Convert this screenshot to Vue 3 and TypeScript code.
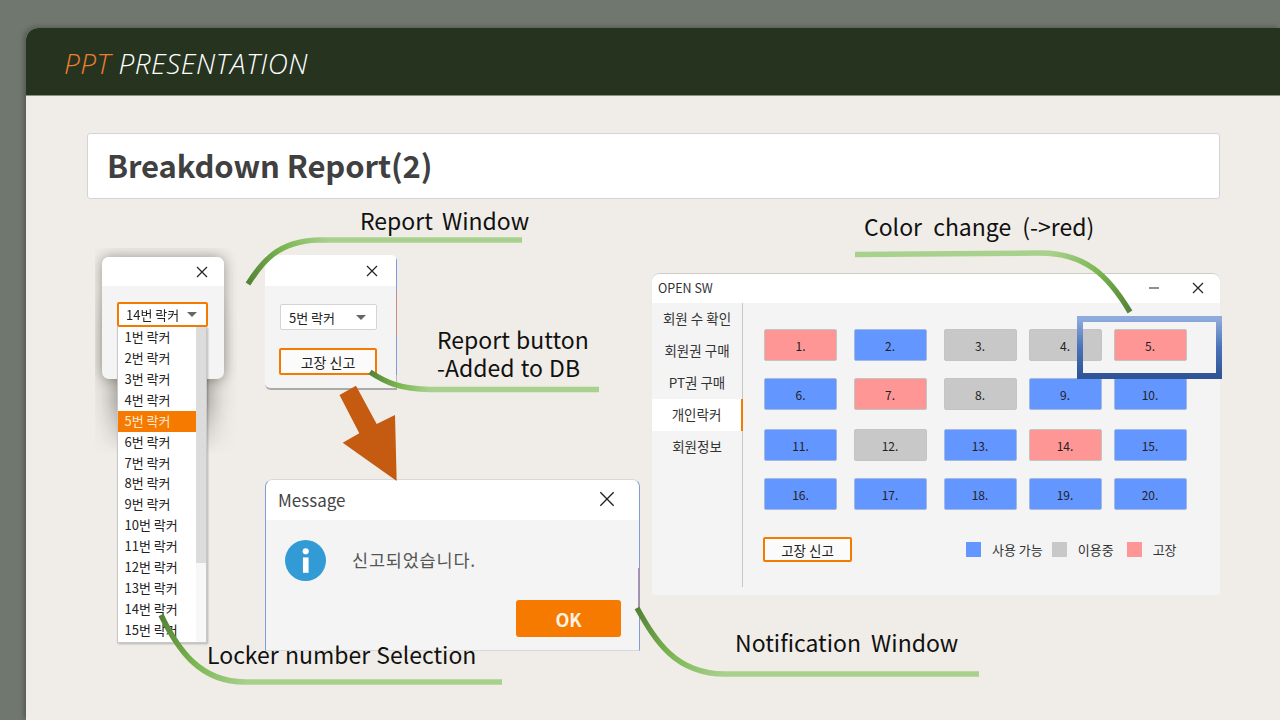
<script setup lang="ts">
type LockerState = 'free' | 'used' | 'broken'

const lockerStates: LockerState[] = [
  'broken', 'free', 'used', 'used', 'broken',
  'free', 'broken', 'used', 'free', 'free',
  'free', 'used', 'free', 'broken', 'free',
  'free', 'free', 'free', 'free', 'free',
]
const lockers = lockerStates.map((state, i) => ({ id: i + 1, state }))

const navItems = ['회원 수 확인', '회원권 구매', 'PT권 구매', '개인락커', '회원정보']
const dropdownItems = Array.from({ length: 15 }, (_, i) => `${i + 1}번 락커`)

const legend = [
  { label: '사용 가능', state: 'free' },
  { label: '이용중', state: 'used' },
  { label: '고장', state: 'broken' },
]

const curves = [
  { id: 'c1', d: 'M248 284 C262 262 278 241 318 240 L522 240', x1: 248, y1: 284, x2: 330, y2: 240 },
  { id: 'c2', d: 'M370 372 C385 382 400 389 430 389.5 L599 389.5', x1: 370, y1: 372, x2: 430, y2: 389 },
  { id: 'c3', d: 'M161 615 C178 650 200 682 245 682 L502 682', x1: 161, y1: 615, x2: 250, y2: 682 },
  { id: 'c4', d: 'M637 608 C655 640 675 674 725 674 L979 674', x1: 637, y1: 608, x2: 725, y2: 674 },
  { id: 'c5', d: 'M1130 312 C1108 275 1085 253 1040 253 L855 254.5', x1: 1130, y1: 312, x2: 1050, y2: 253 },
]
</script>

<template>
  <div class="page">
    <div class="slide">
      <header class="slide-head">
        <span class="accent">PPT</span> PRESENTATION
      </header>
      <div class="slide-body">
        <h1 class="title-card">Breakdown Report(2)</h1>
      </div>
    </div>

    <!-- first capture: dropdown opened -->
    <div class="dim-shot">
      <div class="drop-shadow"></div>
      <div class="win win-select">
        <div class="win-bar">
          <svg class="x" viewBox="0 0 12 12"><path d="M1 1 L11 11 M11 1 L1 11" /></svg>
        </div>
        <div class="win-content">
          <div class="select select-open">
            <span>14번 락커</span>
            <i class="caret"></i>
          </div>
        </div>
      </div>
    </div>
    <div class="dropdown">
      <ul class="drop-list">
        <li v-for="(item, i) in dropdownItems" :key="item" :class="{ picked: i === 4 }">{{ item }}</li>
      </ul>
      <div class="scroll"><div class="thumb"></div></div>
    </div>

    <!-- second capture: report window -->
    <div class="win win-report">
      <div class="win-bar">
        <svg class="x" viewBox="0 0 12 12"><path d="M1 1 L11 11 M11 1 L1 11" /></svg>
      </div>
      <div class="win-content report-content">
        <div class="select select-plain">
          <span>5번 락커</span>
          <i class="caret"></i>
        </div>
        <button class="report-btn">고장 신고</button>
      </div>
    </div>

    <!-- message box -->
    <div class="win win-message">
      <div class="msg-bar">
        <span>Message</span>
        <svg class="x x-big" viewBox="0 0 12 12"><path d="M1 1 L11 11 M11 1 L1 11" /></svg>
      </div>
      <div class="msg-body">
        <div class="msg-row">
          <svg class="info" viewBox="0 0 40 40">
            <circle cx="20" cy="20" r="20" fill="#329bd6" />
            <rect x="17.5" y="17" width="5.5" height="15" fill="#fff" />
            <circle cx="20.2" cy="11" r="3" fill="#fff" />
          </svg>
          <span class="msg-text">신고되었습니다.</span>
        </div>
        <div class="msg-actions">
          <button class="ok">OK</button>
        </div>
      </div>
    </div>

    <!-- main locker window -->
    <div class="win win-main">
      <div class="main-bar">
        <span>OPEN SW</span>
        <div class="bar-btns">
          <svg class="x" viewBox="0 0 12 12"><path d="M1 6 L11 6" /></svg>
          <svg class="x" viewBox="0 0 12 12"><path d="M1 1 L11 11 M11 1 L1 11" /></svg>
        </div>
      </div>
      <div class="main-body">
        <nav class="side">
          <div v-for="(item, i) in navItems" :key="item" class="side-item" :class="{ active: i === 3 }">{{ item }}</div>
        </nav>
        <div class="main-panel">
          <div class="locker-grid">
            <div v-for="l in lockers" :key="l.id" class="locker" :class="l.state">{{ l.id }}.</div>
          </div>
          <div class="main-foot">
            <button class="report-btn foot-btn">고장 신고</button>
            <div class="legend">
              <div v-for="item in legend" :key="item.label" class="legend-item">
                <i class="swatch" :class="item.state"></i>
                <span>{{ item.label }}</span>
              </div>
            </div>
          </div>
        </div>
      </div>
    </div>

    <!-- slide annotations -->
    <svg class="overlay" viewBox="0 0 1280 720">
      <defs>
        <linearGradient
          v-for="c in curves"
          :id="c.id"
          :key="c.id"
          gradientUnits="userSpaceOnUse"
          :x1="c.x1"
          :y1="c.y1"
          :x2="c.x2"
          :y2="c.y2"
        >
          <stop offset="0" stop-color="#548235" />
          <stop offset="0.5" stop-color="#7ab650" />
          <stop offset="1" stop-color="#a9d18e" />
        </linearGradient>
        <linearGradient id="frame" x1="0" y1="0" x2="0" y2="1">
          <stop offset="0" stop-color="#8faadc" />
          <stop offset="0.5" stop-color="#4a72b8" />
          <stop offset="1" stop-color="#2f5597" />
        </linearGradient>
      </defs>
      <path v-for="c in curves" :key="c.id" :d="c.d" fill="none" :stroke="`url(#${c.id})`" stroke-width="5.5" />
      <rect x="1080" y="319" width="139" height="57" fill="none" stroke="url(#frame)" stroke-width="6" />
      <polygon points="339.5,395 356,385.7 376.7,424 395,415 396.7,481 342.7,442.7 359.3,433.3" fill="#c55a11" />
    </svg>

    <span class="label l-window">Report Window</span>
    <span class="label l-button">Report button<br />-Added to DB</span>
    <span class="label l-locker">Locker number Selection</span>
    <span class="label l-notify">Notification Window</span>
    <span class="label l-color">Color change (-&gt;red)</span>
  </div>
</template>

<style>
html,
body {
  margin: 0;
  background: #70776e;
}
</style>

<style scoped>
.page {
  position: relative;
  width: 1280px;
  height: 720px;
  overflow: hidden;
  padding: 28px 0 0 26px;
  box-sizing: border-box;
  background: #70776e;
  font-family: "Noto Sans CJK KR", "Noto Sans", sans-serif;
  color: #222;
}

.slide {
  display: flex;
  flex-direction: column;
  height: 692px;
  background: #f0ede8;
  border-top-left-radius: 12px;
  box-shadow: -2px -1px 5px rgba(0, 0, 0, 0.25);
}

.slide-head {
  height: 68px;
  flex: none;
  box-sizing: border-box;
  padding-left: 38px;
  border-top-left-radius: 12px;
  border-bottom: 1px solid #8a9180;
  background: #26331f;
  color: #fff;
  font-family: "Open Sans", sans-serif;
  font-size: 28px;
  font-weight: 300;
  font-style: italic;
  line-height: 71px;
  letter-spacing: 0.5px;
}

.accent {
  color: #ed7d31;
}

.slide-body {
  padding: 37px 60px 0 61px;
}

.title-card {
  margin: 0;
  height: 66px;
  box-sizing: border-box;
  padding-left: 19px;
  background: #fff;
  border: 1px solid #d5d3da;
  border-radius: 3px;
  color: #404040;
  font-size: 31px;
  font-weight: 700;
  line-height: 61px;
  letter-spacing: -0.1px;
}

.win {
  position: absolute;
  display: flex;
  flex-direction: column;
  background: #f4f4f4;
  box-sizing: border-box;
}

.win-bar {
  height: 29px;
  flex: none;
  background: #fff;
  display: flex;
  align-items: center;
  justify-content: flex-end;
  padding-right: 16px;
}

.x {
  width: 12px;
  height: 12px;
  fill: none;
  stroke: #222;
  stroke-width: 1.2;
}

.dim-shot {
  position: absolute;
  left: 95px;
  top: 248px;
  width: 142px;
  height: 206px;
  overflow: hidden;
  mask-image: linear-gradient(#000 75%, transparent);
}

.drop-shadow {
  position: absolute;
  left: 22px;
  top: 60px;
  width: 90px;
  height: 240px;
  box-shadow: 0 0 26px rgba(40, 40, 30, 0.6);
}

.win-select {
  left: 7px;
  top: 9px;
  width: 122px;
  height: 122px;
  border-radius: 7px;
  overflow: hidden;
  box-shadow: 0 0 14px rgba(40, 40, 30, 0.45);
}

.win-content {
  flex: 1;
  padding: 16px 15px;
}

.select {
  display: flex;
  align-items: center;
  justify-content: space-between;
  box-sizing: border-box;
  background: #fff;
  font-size: 13px;
  color: #222;
}

.select-open {
  width: 91px;
  height: 25px;
  padding: 0 9px 0 7px;
  border: 2px solid #f77a00;
  border-radius: 2px;
}

.select-plain {
  width: 97px;
  height: 26px;
  padding: 0 10px 0 8px;
  border: 1px solid #d4d4d4;
  border-radius: 2px;
}

.caret {
  width: 0;
  height: 0;
  border-left: 5px solid transparent;
  border-right: 5px solid transparent;
  border-top: 5px solid #666;
}

.dropdown {
  position: absolute;
  left: 117px;
  top: 327px;
  width: 90px;
  height: 316px;
  display: flex;
  box-sizing: border-box;
  background: #fff;
  border: 1px solid #c8c8c8;
  border-top: 0;
  box-shadow: 1px 1px 2px rgba(0, 0, 0, 0.25);
  overflow: hidden;
}

.drop-list {
  flex: 1;
  margin: 0;
  padding: 0;
  list-style: none;
  font-size: 13px;
  color: #222;
}

.drop-list li {
  height: 20.93px;
  line-height: 20.5px;
  padding-left: 6.5px;
  white-space: nowrap;
}

.drop-list .picked {
  background: #f77a00;
  color: #ffe9d2;
}

.scroll {
  width: 10px;
  flex: none;
  background: #f7f7f7;
}

.thumb {
  height: 236px;
  background: #dcdcdc;
}

.win-report {
  left: 265px;
  top: 255px;
  width: 132px;
  height: 135px;
  border-bottom: 2px solid #aaa;
  border-radius: 0 6px 0 6px;
  overflow: hidden;
}

.win-report::after {
  content: "";
  position: absolute;
  right: 0;
  top: 0;
  bottom: 0;
  width: 1px;
  background: linear-gradient(#7f9bd8 0 26%, #c98a8a 26% 62%, #7f9bd8 62% 90%, #bbb 90%);
}

.win-report .win-bar {
  height: 31px;
  padding-right: 19px;
}

.report-content {
  display: flex;
  flex-direction: column;
  align-items: flex-start;
  gap: 18px;
  padding: 18px 15px 0;
}

.report-btn {
  font: inherit;
  font-size: 14px;
  color: #222;
  background: #fbfbfb;
  border: 2px solid #f77a00;
  border-radius: 2px;
  padding: 0;
  box-sizing: border-box;
}

.report-content .report-btn {
  width: 98px;
  height: 27px;
  margin-left: -1px;
}

.win-message {
  left: 265px;
  top: 479px;
  width: 375px;
  height: 172px;
  border: 1px solid #d8d8d8;
  border-left-color: #7f9bd8;
  border-right-color: #7f9bd8;
  border-radius: 8px 8px 0 0;
  overflow: hidden;
}

.win-message::after {
  content: "";
  position: absolute;
  right: 0;
  top: 88px;
  height: 40px;
  width: 1px;
  background: #c98a8a;
}

.msg-bar {
  height: 40px;
  flex: none;
  background: #fff;
  display: flex;
  align-items: center;
  justify-content: space-between;
  padding: 0 24px 0 12px;
  font-size: 17px;
  color: #444;
}

.msg-bar span {
  margin-bottom: 1px;
}

.x-big {
  width: 16px;
  height: 16px;
  stroke-width: 1;
  margin-bottom: 3px;
}

.msg-body {
  flex: 1;
  display: flex;
  flex-direction: column;
  padding: 20px 18px 0 19px;
}

.msg-row {
  display: flex;
  align-items: center;
  gap: 26px;
}

.info {
  width: 41px;
  height: 41px;
  flex: none;
}

.msg-text {
  font-size: 17.5px;
  color: #555;
  margin-bottom: 3px;
  letter-spacing: 0.8px;
}

.msg-actions {
  display: flex;
  justify-content: flex-end;
  margin-top: 19px;
}

.ok {
  width: 105px;
  height: 37px;
  border: 0;
  border-radius: 3px;
  background: #f77a00;
  color: #fff2e4;
  font: inherit;
  font-size: 18px;
  font-weight: 700;
}

.win-main {
  left: 652px;
  top: 273px;
  width: 568px;
  height: 322px;
  border-top: 1px solid #cfccc8;
  border-radius: 8px 8px 3px 3px;
  overflow: hidden;
}

.main-bar {
  height: 29px;
  flex: none;
  box-sizing: border-box;
  padding: 0 16px 2px 6px;
  background: #fff;
  display: flex;
  align-items: center;
  justify-content: space-between;
  font-size: 12.5px;
  color: #333;
}

.bar-btns {
  display: flex;
  gap: 32px;
}

.main-body {
  flex: 1;
  display: flex;
  padding-bottom: 8px;
}

.side {
  width: 90px;
  flex: none;
  border-right: 1px solid #c8c8c8;
}

.side-item {
  height: 32px;
  line-height: 31px;
  text-align: center;
  font-size: 13.5px;
  color: #333;
  box-sizing: border-box;
  white-space: nowrap;
}

.side-item.active {
  background: #fff;
  border-right: 2px solid #f77a00;
  margin-right: -1px;
}

.main-panel {
  flex: 1;
  padding: 26px 0 0 21px;
}

.locker-grid {
  display: grid;
  grid-template-columns: 89.5px 90px 85px 85px 73px;
  grid-template-rows: 49px 51px 49px 33px;
}

.locker {
  width: 73px;
  height: 32px;
  box-sizing: border-box;
  border: 1px solid #c4c4c4;
  border-radius: 2px;
  display: flex;
  align-items: center;
  justify-content: center;
  font-size: 12px;
  color: #222;
}

.free {
  background: #6496ff;
}

.used {
  background: #c8c8c8;
}

.broken {
  background: #ff9696;
}

.locker.free {
  border-color: #a4b8e0;
}

.main-foot {
  display: flex;
  align-items: center;
  margin: 26px 0 0 -1px;
  height: 25px;
}

.foot-btn {
  width: 89px;
  height: 25px;
  font-size: 13.5px;
}

.legend {
  display: flex;
  align-items: center;
  margin-left: 114px;
  font-size: 13px;
  color: #333;
}

.legend-item {
  display: flex;
  align-items: center;
  gap: 11px;
  margin-right: 9px;
}

.legend-item:nth-child(2) {
  margin-right: 13px;
}

.swatch {
  width: 15px;
  height: 15px;
  flex: none;
}

.overlay {
  position: absolute;
  left: 0;
  top: 0;
  width: 1280px;
  height: 720px;
  pointer-events: none;
}

.label {
  position: absolute;
  font-size: 23px;
  line-height: 28px;
  color: #111;
  white-space: nowrap;
  word-spacing: 2px;
}

.l-window { left: 360px; top: 206px; word-spacing: 4px; }
.l-button { left: 437px; top: 325px; word-spacing: 1px; }
.l-locker { left: 207px; top: 640px; word-spacing: 1px; }
.l-notify { left: 735px; top: 628px; word-spacing: 5px; }
.l-color { left: 864px; top: 212px; word-spacing: 6px; }
</style>
